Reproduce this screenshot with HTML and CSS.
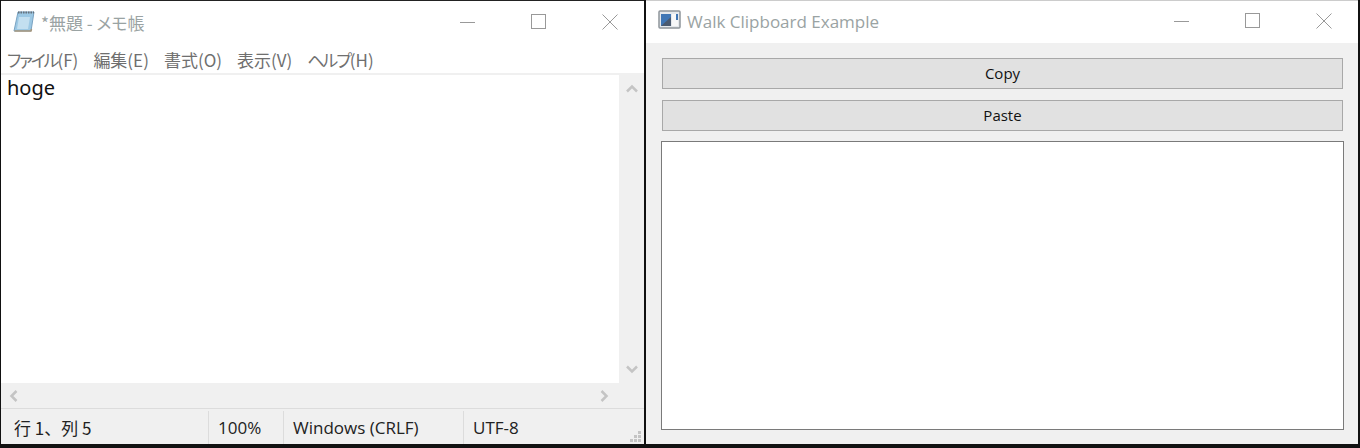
FILE: index.html
```html
<!DOCTYPE html>
<html lang="ja">
<head>
    <meta charset="UTF-8">
    <title>Clipboard Example</title>
    <link rel="stylesheet" href="styles.css">
</head>
<body>
    <div class="desktop">
        <div class="window notepad">
            <div class="titlebar">
                <svg class="app-icon" width="24" height="24" viewBox="0 0 24 24">
                    <path d="M6 3h16l-3 19H2z" fill="#9cc8e4" stroke="#7aa3c2"/>
                    <path d="M7 8l-2 12h11l2-12z" fill="#c3dff0"/>
                    <path d="M2.500 22H19l.5-2" fill="none" stroke="#a8977c" stroke-width="1.500"/>
                    <path d="M6 3.500h16" stroke="#67727c" stroke-width="2" stroke-dasharray="1.500 1"/>
                </svg>
                <span class="title">*無題 - メモ帳</span>
                <div class="controls">
                    <svg class="ctl" width="16" height="16" viewBox="0 0 16 16"><path d="M0 8.500h15" stroke="#999"/></svg>
                    <svg class="ctl" width="16" height="16" viewBox="0 0 16 16"><rect x="0.500" y="0.500" width="14" height="14" fill="none" stroke="#999"/></svg>
                    <svg class="ctl" width="16" height="16" viewBox="0 0 16 16"><path d="M0.500 0.500l15 15M15.500 0.500l-15 15" stroke="#999"/></svg>
                </div>
            </div>
            <div class="menubar">
                <span><span class="kana">ファイル</span>(F)</span>
                <span>編集(E)</span>
                <span>書式(O)</span>
                <span>表示(V)</span>
                <span><span class="kana">ヘルプ</span>(H)</span>
            </div>
            <div class="editor">
                <div class="text-area">hoge</div>
                <div class="vscroll">
                    <svg width="14" height="9" viewBox="0 0 14 9"><path d="M2 7.500l5-5 5 5" fill="none" stroke="#c4c4c4" stroke-width="2.500"/></svg>
                    <svg width="14" height="9" viewBox="0 0 14 9"><path d="M2 1.500l5 5 5-5" fill="none" stroke="#c4c4c4" stroke-width="2.500"/></svg>
                </div>
            </div>
            <div class="hscroll">
                <svg width="9" height="14" viewBox="0 0 9 14"><path d="M7.500 2l-5 5 5 5" fill="none" stroke="#c4c4c4" stroke-width="2.500"/></svg>
                <svg width="9" height="14" viewBox="0 0 9 14"><path d="M1.500 2l5 5-5 5" fill="none" stroke="#c4c4c4" stroke-width="2.500"/></svg>
            </div>
            <div class="statusbar">
                <div class="cell cell-pos">行 1、列 5</div>
                <div class="cell cell-zoom">100%</div>
                <div class="cell cell-eol">Windows (CRLF)</div>
                <div class="cell cell-enc">UTF-8</div>
                <svg class="grip" width="12" height="12" viewBox="0 0 12 12"><path d="M8 0h3v3H8zM4 4h3v3H4zM8 4h3v3H8zM0 8h3v3H0zM4 8h3v3H4zM8 8h3v3H8z" fill="#c4c4c4"/></svg>
            </div>
        </div>
        <div class="window walk">
            <div class="titlebar">
                <svg class="walk-icon" width="24" height="20" viewBox="0 0 24 20">
                    <rect x="1" y="1" width="21" height="17" rx="1" fill="#e4e8ec" stroke="#8f959b" stroke-width="1.500"/>
                    <rect x="3" y="4" width="10" height="12" fill="#3f76b5"/>
                    <path d="M3 16l10-9v9z" fill="#4a5a70"/>
                    <rect x="14" y="4" width="6" height="12" fill="#f7f8f9"/>
                    <rect x="18" y="4" width="2" height="6" fill="#3f76b5"/>
                </svg>
                <span class="title">Walk Clipboard Example</span>
                <div class="controls">
                    <svg class="ctl" width="16" height="16" viewBox="0 0 16 16"><path d="M0 8.500h15" stroke="#999"/></svg>
                    <svg class="ctl" width="16" height="16" viewBox="0 0 16 16"><rect x="0.500" y="0.500" width="14" height="14" fill="none" stroke="#999"/></svg>
                    <svg class="ctl" width="16" height="16" viewBox="0 0 16 16"><path d="M0.500 0.500l15 15M15.500 0.500l-15 15" stroke="#999"/></svg>
                </div>
            </div>
            <div class="client">
                <button class="btn">Copy</button>
                <button class="btn">Paste</button>
                <div class="output"></div>
            </div>
        </div>
    </div>
</body>
</html>
```

FILE: styles.css
```css
html, body {
    margin: 0;
    padding: 0;
}
body {
    width: 1360px;
    height: 448px;
    overflow: hidden;
    background-color: #111;
    font-family: "Open Sans", "Noto Sans CJK JP", sans-serif;
}
.desktop {
    display: flex;
    height: 444px;
}
.window {
    display: flex;
    flex-direction: column;
    background-color: white;
}
.notepad {
    width: 643px;
    margin-left: 1px;
    border-top: 1px solid #222;
}
.walk {
    width: 712px;
    margin-left: 2px;
    border-top: 1px solid #ccc;
}
.titlebar {
    display: flex;
    align-items: center;
    height: 42px;
    flex-shrink: 0;
}
.app-icon {
    margin-left: 11px;
    margin-top: -2px;
}
.walk-icon {
    margin-left: 12px;
    margin-top: -5px;
}
.title {
    margin-left: 5px;
    font-size: 17px;
    color: #9aa3a3;
}
.notepad .title {
    font-family: "Noto Sans CJK JP", sans-serif;
    font-feature-settings: "palt";
}
.walk .title {
    margin-left: 5px;
    margin-top: -1px;
}
.controls {
    display: flex;
    margin-left: auto;
    gap: 55px;
}
.notepad .controls {
    margin-right: 26px;
}
.walk .controls {
    margin-right: 26px;
    margin-top: -3px;
}
.menubar {
    display: flex;
    align-items: center;
    gap: 15px;
    height: 32px;
    padding: 3px 0 0 6px;
    font-family: "Noto Sans CJK JP", sans-serif;
    font-feature-settings: "palt";
    font-size: 17px;
    color: #6f6f6f;
    box-sizing: border-box;
    border-bottom: 2px solid #f0f0f0;
}
.kana {
    letter-spacing: -2.1px;
}
.editor {
    display: flex;
    height: 308px;
}
.text-area {
    flex: 1;
    padding: 0 6px;
    font-family: "Noto Sans", sans-serif;
    font-size: 20px;
    line-height: 25px;
    color: #111;
}
.vscroll {
    display: flex;
    flex-direction: column;
    justify-content: space-between;
    align-items: center;
    width: 25px;
    padding: 9px 0 9px;
    box-sizing: border-box;
    background-color: #f0f0f0;
}
.hscroll {
    display: flex;
    justify-content: space-between;
    align-items: center;
    height: 25px;
    padding: 0 35px 0 8px;
    background-color: #f0f0f0;
    flex-shrink: 0;
}
.statusbar {
    position: relative;
    display: flex;
    flex: 1;
    border-top: 1px solid #dcdcdc;
    background-color: #f0f0f0;
    font-size: 17px;
    color: #222;
}
.cell {
    display: flex;
    align-items: center;
    margin-top: 2px;
    border-left: 1px solid #dcdcdc;
    box-sizing: border-box;
    padding-left: 9px;
}
.cell-pos {
    width: 207px;
    border-left: none;
    padding-left: 13px;
    font-family: "Noto Sans CJK JP", sans-serif;
}
.cell-zoom {
    width: 75px;
}
.cell-eol {
    width: 180px;
}
.cell-enc {
    flex: 1;
}
.grip {
    position: absolute;
    right: 2px;
    bottom: 1px;
}
.client {
    flex: 1;
    display: flex;
    flex-direction: column;
    background-color: #f0f0f0;
    padding: 15px 14px 14px 15px;
}
.btn {
    height: 31px;
    margin: 0 1px 11px;
    padding: 0 0 2px;
    border: 1px solid #a8a8a8;
    background-color: #e1e1e1;
    font-family: "Open Sans", sans-serif;
    font-size: 15px;
    color: #111;
}
.output {
    flex: 1;
    margin-top: -1px;
    border: 1px solid #7a7a7a;
    background-color: white;
}
```
